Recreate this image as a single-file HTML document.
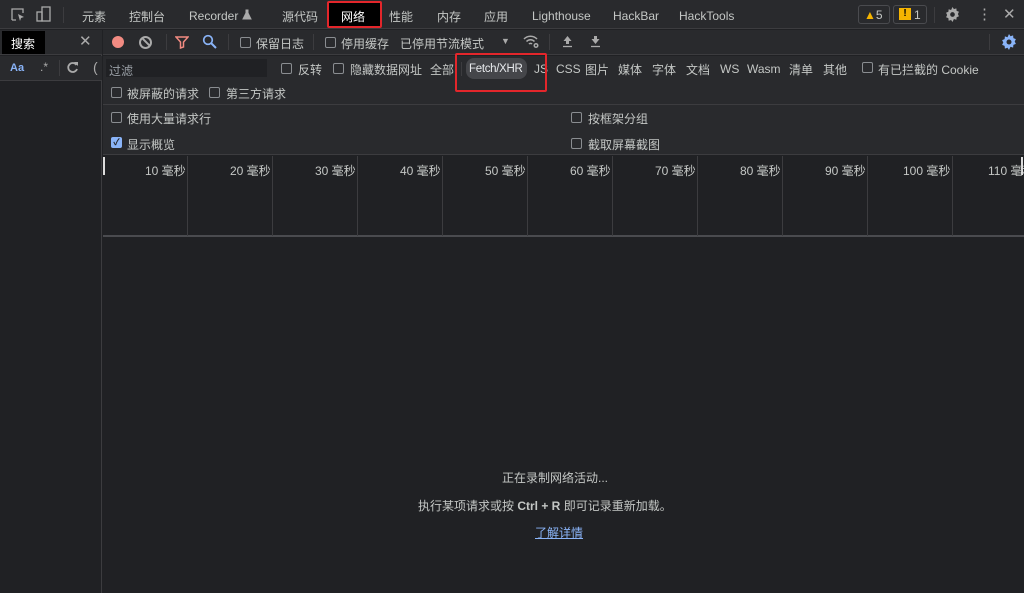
<!DOCTYPE html><html><head><meta charset="utf-8"><style>
*{margin:0;padding:0;box-sizing:border-box}
body{width:1024px;height:593px;overflow:hidden;background:#202124;font-family:"Liberation Sans","Noto Sans CJK SC",sans-serif;font-size:12px;color:#c4c7c5;position:relative}
.a{position:absolute;white-space:nowrap}
.cb{position:absolute;width:11px;height:11px;border:1px solid #8a8d91;border-radius:2px}
.vl{position:absolute;background:#3c3c3f;width:1px}
</style></head><body>
<div class="a" style="left:0;top:0;width:1024px;height:29px;background:#292a2d;border-bottom:1px solid #3c3c3f"></div>
<svg class="a" style="left:10px;top:7px" width="16" height="16"><path d="M2 13V2h11v4M2 13h4" stroke="#aaa" fill="none" stroke-width="1.3"/><path d="M8 7l6 3-3 1-1 3z" fill="#aaa"/></svg>
<svg class="a" style="left:36px;top:6px" width="16" height="17"><rect x="6" y="1" width="8" height="14" stroke="#aaa" fill="none" stroke-width="1.3"/><rect x="1" y="6" width="5" height="9" stroke="#aaa" fill="none" stroke-width="1.3"/></svg>
<div class="vl" style="left:63px;top:7px;height:16px"></div>
<div class="a" style="left:82px;top:8px">元素</div>
<div class="a" style="left:129px;top:8px">控制台</div>
<div class="a" style="left:189px;top:9px">Recorder</div>
<svg class="a" style="left:242px;top:9px" width="10" height="11"><path d="M3.5 1h3M4 1v3L1 10h8L6 4V1" fill="#aaa" stroke="#aaa"/></svg>
<div class="a" style="left:282px;top:8px">源代码</div>
<div class="a" style="left:327px;top:1px;width:55px;height:27px;background:#000;border:2px solid #e3262b;border-radius:2px"></div>
<div class="a" style="left:341px;top:8px;color:#fff">网络</div>
<div class="a" style="left:389px;top:8px">性能</div>
<div class="a" style="left:437px;top:8px">内存</div>
<div class="a" style="left:484px;top:8px">应用</div>
<div class="a" style="left:532px;top:9px">Lighthouse</div>
<div class="a" style="left:613px;top:9px">HackBar</div>
<div class="a" style="left:679px;top:9px">HackTools</div>
<div class="a" style="left:858px;top:5px;width:32px;height:19px;border:1px solid #4a4b4f;border-radius:3px"></div>
<div class="a" style="left:864px;top:8px"><span style="color:#f5b400">▲</span>5</div>
<div class="a" style="left:893px;top:5px;width:34px;height:19px;border:1px solid #4a4b4f;border-radius:3px"></div>
<div class="a" style="left:899px;top:8px;width:12px;height:12px;background:#f5b400;color:#000;font-size:10px;text-align:center;line-height:12px;font-weight:bold">!</div>
<div class="a" style="left:914px;top:8px">1</div>
<div class="vl" style="left:934px;top:7px;height:16px"></div>
<svg class="a" style="left:945px;top:7px" width="15" height="15" viewBox="0 0 16 16"><path d="M8 0l1.5 2.2 2.6-.8.3 2.7 2.5 1-1.2 2.4 1.2 2.4-2.5 1-.3 2.7-2.6-.8L8 16l-1.5-2.2-2.6.8-.3-2.7-2.5-1L2.3 8.5 1.1 6.1l2.5-1 .3-2.7 2.6.8z" fill="#aaa"/><circle cx="8" cy="8" r="2.5" fill="#292a2d"/></svg>
<div class="a" style="left:977px;top:5px;font-size:15px;color:#aaa">⋮</div>
<div class="a" style="left:1003px;top:5px;font-size:15px;color:#aaa">✕</div>
<div class="a" style="left:0;top:30px;width:102px;height:563px;background:#202124;border-right:1px solid #3c3c3f"></div>
<div class="a" style="left:0;top:30px;width:102px;height:25px;background:#292a2d;border-bottom:1px solid #3c3c3f"></div>
<div class="a" style="left:2px;top:31px;width:43px;height:23px;background:#000"></div>
<div class="a" style="left:11px;top:35px;color:#fff">搜索</div>
<div class="a" style="left:79px;top:32px;font-size:15px;color:#aaa">✕</div>
<div class="a" style="left:0;top:56px;width:102px;height:25px;background:#292a2d;border-bottom:1px solid #3c3c3f"></div>
<div class="a" style="left:10px;top:62px;color:#8ab4f8;font-weight:bold;font-size:11px">Aa</div>
<div class="a" style="left:40px;top:60px;color:#aaa">.*</div>
<div class="vl" style="left:59px;top:60px;height:16px"></div>
<svg class="a" style="left:66px;top:61px" width="13" height="13"><path d="M10.5 4A4.5 4.5 0 1 0 11 8" stroke="#aaa" fill="none" stroke-width="1.8"/><path d="M8 1l4 0 0 4z" fill="#aaa"/></svg>
<div class="a" style="left:93px;top:59px;color:#aaa;font-size:14px">(</div>
<div class="a" style="left:103px;top:30px;width:921px;height:25px;background:#292a2d;border-bottom:1px solid #3c3c3f"></div>
<div class="a" style="left:112px;top:36px;width:12px;height:12px;border-radius:50%;background:#f28b82"></div>
<div class="a" style="left:139px;top:36px;width:13px;height:13px;border-radius:50%;border:2px solid #aaa"></div>
<div class="a" style="left:144px;top:41px;width:10px;height:2px;background:#aaa;transform:translate(-3px,0) rotate(45deg)"></div>
<div class="vl" style="left:166px;top:34px;height:16px"></div>
<svg class="a" style="left:175px;top:35px" width="14" height="14"><path d="M1 2h12l-4.5 5v5l-3 1V7z" stroke="#f28b82" fill="none" stroke-width="1.5"/></svg>
<svg class="a" style="left:202px;top:34px" width="15" height="15"><circle cx="6" cy="6" r="4.3" stroke="#8ab4f8" fill="none" stroke-width="1.7"/><path d="M9 9l5 5" stroke="#8ab4f8" stroke-width="2"/></svg>
<div class="vl" style="left:228px;top:34px;height:16px"></div>
<div class="cb" style="left:240px;top:37px"></div><div class="a" style="left:256px;top:35px">保留日志</div>
<div class="vl" style="left:313px;top:34px;height:16px"></div>
<div class="cb" style="left:325px;top:37px"></div><div class="a" style="left:341px;top:35px">停用缓存</div>
<div class="a" style="left:400px;top:35px">已停用节流模式</div>
<div class="a" style="left:501px;top:36px;font-size:9px;color:#aaa">▼</div>
<svg class="a" style="left:522px;top:33px" width="18" height="16"><path d="M2 6a9 9 0 0 1 13 0M4.5 8.5a5.5 5.5 0 0 1 8 0M7 11a2 2 0 0 1 3 0" stroke="#aaa" fill="none" stroke-width="1.5"/><circle cx="14" cy="12.5" r="2.5" fill="#aaa"/><circle cx="14" cy="12.5" r="1" fill="#292a2d"/></svg>
<div class="vl" style="left:549px;top:34px;height:16px"></div>
<svg class="a" style="left:562px;top:35px" width="11" height="13"><path d="M5.5 1L1.5 6h2.5v3h3V6h2.5z" fill="#aaa"/><path d="M1 11.5h9" stroke="#aaa" stroke-width="1.3"/></svg>
<svg class="a" style="left:590px;top:35px" width="11" height="13"><path d="M5.5 9L1.5 4h2.5V1h3v3h2.5z" fill="#aaa"/><path d="M1 11.5h9" stroke="#aaa" stroke-width="1.3"/></svg>
<div class="vl" style="left:989px;top:34px;height:16px"></div>
<svg class="a" style="left:1001px;top:34px" width="16" height="16" viewBox="0 0 16 16"><path d="M8 0l1.5 2.2 2.6-.8.3 2.7 2.5 1-1.2 2.4 1.2 2.4-2.5 1-.3 2.7-2.6-.8L8 16l-1.5-2.2-2.6.8-.3-2.7-2.5-1L2.3 8.5 1.1 6.1l2.5-1 .3-2.7 2.6.8z" fill="#8ab4f8"/><circle cx="8" cy="8" r="2.5" fill="#292a2d"/></svg>
<div class="a" style="left:103px;top:56px;width:921px;height:49px;background:#292a2d;border-bottom:1px solid #3c3c3f"></div>
<div class="a" style="left:106px;top:59px;width:161px;height:18px;background:#202124"></div>
<div class="a" style="left:109px;top:62px;color:#9aa0a6">过滤</div>
<div class="cb" style="left:281px;top:63px"></div><div class="a" style="left:298px;top:61px">反转</div>
<div class="cb" style="left:333px;top:63px"></div><div class="a" style="left:350px;top:61px">隐藏数据网址</div>
<div class="a" style="left:430px;top:61px">全部</div>
<div class="vl" style="left:461px;top:62px;height:14px"></div>
<div class="a" style="left:466px;top:58px;width:61px;height:21px;background:#45464a;border-radius:8px"></div>
<div class="a" style="left:469px;top:63px;color:#e8eaed;font-size:11.5px;letter-spacing:-0.3px">Fetch/XHR</div>
<div class="a" style="left:534px;top:62px">JS</div>
<div class="a" style="left:556px;top:62px">CSS</div>
<div class="a" style="left:585px;top:61px">图片</div>
<div class="a" style="left:618px;top:61px">媒体</div>
<div class="a" style="left:652px;top:61px">字体</div>
<div class="a" style="left:686px;top:61px">文档</div>
<div class="a" style="left:720px;top:62px">WS</div>
<div class="a" style="left:747px;top:62px">Wasm</div>
<div class="a" style="left:789px;top:61px">清单</div>
<div class="a" style="left:823px;top:61px">其他</div>
<div class="cb" style="left:862px;top:62px"></div><div class="a" style="left:878px;top:61px">有已拦截的 Cookie</div>
<div class="a" style="left:455px;top:53px;width:92px;height:39px;border:2px solid #e3262b;border-radius:2px"></div>
<div class="cb" style="left:111px;top:87px"></div><div class="a" style="left:127px;top:85px">被屏蔽的请求</div>
<div class="cb" style="left:209px;top:87px"></div><div class="a" style="left:226px;top:85px">第三方请求</div>
<div class="a" style="left:103px;top:105px;width:921px;height:50px;background:#292a2d;border-bottom:1px solid #3c3c3f"></div>
<div class="cb" style="left:111px;top:112px"></div><div class="a" style="left:127px;top:110px">使用大量请求行</div>
<div class="a" style="left:111px;top:137px;width:11px;height:11px;background:#8ab4f8;border-radius:2px;color:#202124;font-size:9px;line-height:11px;text-align:center;font-weight:bold">✓</div><div class="a" style="left:127px;top:136px">显示概览</div>
<div class="cb" style="left:571px;top:112px"></div><div class="a" style="left:588px;top:110px">按框架分组</div>
<div class="cb" style="left:571px;top:138px"></div><div class="a" style="left:588px;top:136px">截取屏幕截图</div>
<div class="a" style="left:103px;top:156px;width:921px;height:81px;border-bottom:2px solid #4a4b4f"></div>
<div class="a" style="left:103px;top:157px;width:2px;height:18px;background:#ddd"></div>
<div class="a" style="left:1021px;top:157px;width:2px;height:18px;background:#ddd"></div>
<div class="vl" style="left:187px;top:156px;height:80px"></div><div class="a" style="left:145px;top:162px">10 毫秒</div>
<div class="vl" style="left:272px;top:156px;height:80px"></div><div class="a" style="left:230px;top:162px">20 毫秒</div>
<div class="vl" style="left:357px;top:156px;height:80px"></div><div class="a" style="left:315px;top:162px">30 毫秒</div>
<div class="vl" style="left:442px;top:156px;height:80px"></div><div class="a" style="left:400px;top:162px">40 毫秒</div>
<div class="vl" style="left:527px;top:156px;height:80px"></div><div class="a" style="left:485px;top:162px">50 毫秒</div>
<div class="vl" style="left:612px;top:156px;height:80px"></div><div class="a" style="left:570px;top:162px">60 毫秒</div>
<div class="vl" style="left:697px;top:156px;height:80px"></div><div class="a" style="left:655px;top:162px">70 毫秒</div>
<div class="vl" style="left:782px;top:156px;height:80px"></div><div class="a" style="left:740px;top:162px">80 毫秒</div>
<div class="vl" style="left:867px;top:156px;height:80px"></div><div class="a" style="left:825px;top:162px">90 毫秒</div>
<div class="vl" style="left:952px;top:156px;height:80px"></div><div class="a" style="left:903px;top:162px">100 毫秒</div>
<div class="a" style="left:988px;top:162px">110 毫秒</div>
<div class="a" style="left:502px;top:469px">正在录制网络活动...</div>
<div class="a" style="left:418px;top:497px">执行某项请求或按 <b>Ctrl + R</b> 即可记录重新加载。</div>
<div class="a" style="left:535px;top:524px;color:#8ab4f8;text-decoration:underline">了解详情</div>
</body></html>
